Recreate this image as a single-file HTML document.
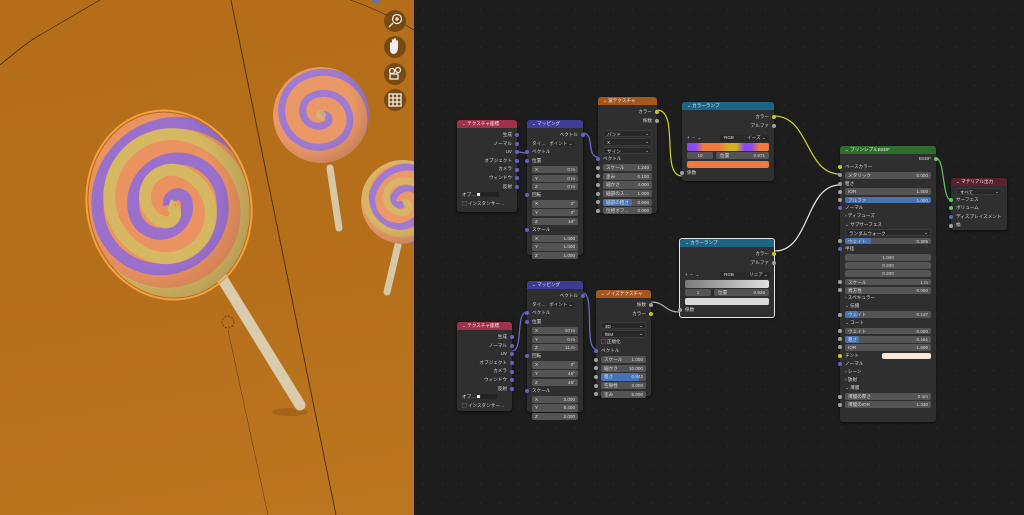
<!DOCTYPE html>
<html><head><meta charset="utf-8"><style>
*{margin:0;padding:0;box-sizing:border-box}
body{width:1024px;height:515px;overflow:hidden;background:#1d1d1d;position:relative;font-family:"Liberation Sans","Noto Sans CJK JP",sans-serif}
#vp{position:absolute;left:0;top:0;width:414px;height:515px;overflow:hidden;background:linear-gradient(170deg,#b56d19 0%,#b56e1a 50%,#bd7620 100%)}
#ne{position:absolute;left:414px;top:0;width:610px;height:515px;background-color:#1d1d1d;background-image:radial-gradient(#262626 0.8px,transparent 1px);background-size:19px 19px}
.n{position:absolute;background:#2f2f2f;border-radius:3px;box-shadow:0 1px 3px rgba(0,0,0,.6);font-size:4.6px;color:#dcdcdc}
.h{height:8px;line-height:8px;padding-left:5px;border-radius:3px 3px 0 0;color:#eee;font-size:4.6px}
.b{padding-top:3px}
.r{height:8.6px;line-height:8.6px;position:relative;padding:0 5px;white-space:nowrap}
.o{text-align:right}
.s{position:absolute;top:2.3px;width:4px;height:4px;border-radius:50%;background:#a1a1a1}
.o .s{right:-2px}.i .s,.f .s{left:-2px}
.p{background:#6363c7!important}.y{background:#c7c729!important}.g{background:#5fc75f!important}
.bx{position:absolute;left:5px;right:5px;top:0.7px;bottom:0.7px;background:#545454;border-radius:2px;padding:0 3px;line-height:7.2px}
.bx b{font-weight:normal;float:right}
.dd{background:#282828;border:0.5px solid #3a3a3a}
.dd:after{content:"⌄";position:absolute;right:2px;top:-1px}
.bl{position:absolute;left:0;top:0;bottom:0;background:#4772b3;border-radius:2px}
.bx span{position:relative}
.sw{position:absolute;border-radius:2px}
</style></head><body>
<div id="vp">
<svg width="414" height="515" style="position:absolute;left:0;top:0">
<defs>
<path id="sp" fill="none" stroke-width="14" d="M0,0 A10.5,10.5 0 0 1 21,0 A31.5,31.5 0 0 1 -42,0 A52.5,52.5 0 0 1 63,0 A73.5,73.5 0 0 1 -84,0 A94.5,94.5 0 0 1 105,0 A115.5,115.5 0 0 1 -126,0 A136.5,136.5 0 0 1 147,0"/>
<clipPath id="c1"><ellipse cx="0" cy="0" rx="80" ry="93"/></clipPath>
<clipPath id="c2"><circle cx="0" cy="0" r="48"/></clipPath>
<clipPath id="c3"><circle cx="0" cy="0" r="42"/></clipPath>
<radialGradient id="sh" cx="0.4" cy="0.4" r="0.7"><stop offset="0.6" stop-color="#000" stop-opacity="0"/><stop offset="1" stop-color="#000" stop-opacity="0.18"/></radialGradient>
</defs>
<path d="M0,65 Q30,40 40,35 L100,0" stroke="#3a2408" stroke-width="0.7" fill="none"/>
<path d="M231,0 L336,515" stroke="#3a2408" stroke-width="0.8" fill="none"/>
<path d="M228,330 L268,515" stroke="#5a3a10" stroke-width="0.5" fill="none"/>
<path d="M350,0 Q380,10 414,30" stroke="#3a2408" stroke-width="0.6" fill="none"/>
<ellipse cx="290" cy="412" rx="18" ry="4" fill="#8a5010" opacity="0.4"/>
<line x1="220" y1="275" x2="300" y2="405" stroke="#d9cbab" stroke-width="11" stroke-linecap="round"/>
<line x1="330" y1="168" x2="339" y2="228" stroke="#d6c8a6" stroke-width="7" stroke-linecap="round"/>
<line x1="398" y1="245" x2="387" y2="292" stroke="#d6c8a6" stroke-width="7" stroke-linecap="round"/>
<g transform="translate(169,205) rotate(-12)">
<ellipse cx="0" cy="0" rx="82" ry="95" fill="none" stroke="#f5a040" stroke-width="2"/>
<g clip-path="url(#c1)">
<ellipse cx="0" cy="0" rx="80" ry="93" fill="#ea9260"/>
<g transform="scale(0.85)">
<use href="#sp" stroke="#9a70cc"/>
<use href="#sp" stroke="#d6b862" transform="rotate(120)"/>
</g>
<ellipse cx="0" cy="0" rx="80" ry="93" fill="url(#sh)"/>
</g></g>
<circle cx="175" cy="205" r="1.5" fill="#f39040"/>
<circle cx="228" cy="322" r="6" fill="none" stroke="#4a2c08" stroke-width="0.7" stroke-dasharray="2 1.5"/>
<g transform="translate(321,115)">
<g clip-path="url(#c2)">
<circle r="48" fill="#eb9868"/>
<g transform="scale(0.5) rotate(60)">
<use href="#sp" stroke="#a07ad0"/>
</g>
<circle r="5" fill="#d6b86c" opacity="0.7"/>
<circle r="48" fill="url(#sh)"/>
</g></g>
<g transform="translate(403,202)">
<g clip-path="url(#c3)">
<circle r="42" fill="#eb9868"/>
<g transform="scale(0.5) rotate(200)">
<use href="#sp" stroke="#a07ad0"/>
<use href="#sp" stroke="#d8b466" transform="rotate(240)"/>
</g>
<circle r="42" fill="url(#sh)"/>
</g></g>
<g fill="#6e4410" opacity="0.85">
<circle cx="395" cy="21" r="11"/><circle cx="395" cy="47" r="11"/><circle cx="395" cy="74" r="11"/><circle cx="395" cy="100" r="11"/>
</g>
<circle cx="376" cy="0" r="4" fill="#6b6fa8"/>
<g stroke="#eee" fill="none" stroke-width="1.3">
<circle cx="397" cy="19" r="4.5"/><line x1="393" y1="23" x2="389" y2="27"/><line x1="397" y1="17" x2="397" y2="21"/><line x1="395" y1="19" x2="399" y2="19"/>
<rect x="389" y="94" width="12" height="12"/><line x1="393" y1="94" x2="393" y2="106"/><line x1="397" y1="94" x2="397" y2="106"/><line x1="389" y1="98" x2="401" y2="98"/><line x1="389" y1="102" x2="401" y2="102"/>
<circle cx="392" cy="71" r="2.5"/><circle cx="398" cy="70" r="2.5"/><rect x="390" y="74" width="8" height="5"/>
</g>
<path d="M390,50 L390,43 Q391,41 392,43 L392,47 L392,40 Q393,38 394,40 L394,46 L394,39 Q395,37 396,39 L396,46 L396,41 Q397,39 398,41 L398,49 Q397,54 393,54 Q390,53 390,50Z" fill="#eee"/>
</svg>
</div>
<div id="ne"></div>
<svg width="1024" height="515" style="position:absolute;left:0;top:0;z-index:1" fill="none" stroke-width="1.2">
<path d="M517,152 C522,152 522,153 527,153" stroke="#6b6bd0"/>
<path d="M583,133 C595,133 586,157 598,157" stroke="#6b6bd0"/>
<path d="M657,110 C680,110 660,176 682,176" stroke="#d0d030"/>
<path d="M774,116 C810,116 805,174 840,174" stroke="#d0d030"/>
<path d="M775,251 C810,251 805,185 840,185" stroke="#e0e0e0"/>
<path d="M651,302 C665,302 665,312 679,312" stroke="#b0b0b0"/>
<path d="M512,351 C524,351 515,312 527,312" stroke="#6b6bd0"/>
<path d="M583,293 C595,293 584,349 596,349" stroke="#6b6bd0"/>
<path d="M936,158 C945,158 942,200 951,200" stroke="#5fc75f"/>
</svg>
<div style="position:absolute;left:0;top:0;z-index:2">

<div class="n" style="left:457px;top:120px;width:60px;height:92px">
<div class="h" style="background:#a0304e">⌄ テクスチャ座標</div><div class="b">
<div class="r o">生成<i class="s p"></i></div><div class="r o">ノーマル<i class="s p"></i></div><div class="r o">UV<i class="s p"></i></div><div class="r o">オブジェクト<i class="s p"></i></div><div class="r o">カメラ<i class="s p"></i></div><div class="r o">ウィンドウ<i class="s p"></i></div><div class="r o">反射<i class="s p"></i></div>
<div class="r">オブ… <span style="background:#eee;display:inline-block;width:3px;height:3px"></span> <span style="background:#222;display:inline-block;width:18px;height:5px;vertical-align:middle"></span></div>
<div class="r">▢ インスタンサー…</div></div></div>

<div class="n" style="left:527px;top:120px;width:56px;height:135px">
<div class="h" style="background:#3f3c96">⌄ マッピング</div><div class="b">
<div class="r o">ベクトル<i class="s p"></i></div>
<div class="r">タイ… <span style="background:#282828;padding:0 2px">ポイント ⌄</span></div>
<div class="r i">ベクトル<i class="s p"></i></div><div class="r i">位置<i class="s p"></i></div>
<div class="r f"><div class="bx">X<b>0 m</b></div></div><div class="r f"><div class="bx">Y<b>0 m</b></div></div><div class="r f"><div class="bx">Z<b>0 m</b></div></div>
<div class="r i">回転<i class="s p"></i></div>
<div class="r f"><div class="bx">X<b>0°</b></div></div><div class="r f"><div class="bx">Y<b>0°</b></div></div><div class="r f"><div class="bx">Z<b>10°</b></div></div>
<div class="r i">スケール<i class="s p"></i></div>
<div class="r f"><div class="bx">X<b>1.000</b></div></div><div class="r f"><div class="bx">Y<b>1.000</b></div></div><div class="r f"><div class="bx">Z<b>1.000</b></div></div>
</div></div>

<div class="n" style="left:598px;top:97px;width:59px;height:116px">
<div class="h" style="background:#a8561c">⌄ 波テクスチャ</div><div class="b">
<div class="r o">カラー<i class="s y"></i></div><div class="r o">係数<i class="s"></i></div>
<div class="r" style="height:4px"></div>
<div class="r"><div class="bx dd">バンド</div></div><div class="r"><div class="bx dd">X</div></div><div class="r"><div class="bx dd">サイン</div></div>
<div class="r i">ベクトル<i class="s p"></i></div>
<div class="r f"><i class="s"></i><div class="bx">スケール<b>1.240</b></div></div>
<div class="r f"><i class="s"></i><div class="bx">歪み<b>0.100</b></div></div>
<div class="r f"><i class="s"></i><div class="bx">細かさ<b>4.000</b></div></div>
<div class="r f"><i class="s"></i><div class="bx">細部のス…<b>1.000</b></div></div>
<div class="r f"><i class="s"></i><div class="bx"><div class="bl" style="width:60%"></div><span>細部の粗さ</span><b style="position:relative">0.500</b></div></div>
<div class="r f"><i class="s"></i><div class="bx">位相オフ…<b>0.000</b></div></div>
</div></div>

<div class="n" style="left:682px;top:102px;width:92px;height:79px">
<div class="h" style="background:#1e6585">⌄ カラーランプ</div><div class="b">
<div class="r o">カラー<i class="s y"></i></div><div class="r o">アルファ<i class="s"></i></div>
<div class="r" style="height:4px"></div>
<div class="r">+ &nbsp;− &nbsp;⌄ <span style="position:absolute;left:38px;top:1px;width:24px;height:6.5px;background:#282828;padding-left:4px;line-height:6.5px">RGB</span><span style="position:absolute;left:63px;top:1px;width:24px;height:6.5px;background:#282828;padding-left:2px;line-height:6.5px">イーズ ⌄</span></div>
<div class="r"><div class="sw" style="left:5px;right:5px;top:0;height:8px;background:linear-gradient(90deg,#8a4af0 0%,#8a4af0 10%,#f07a40 20%,#f07a40 40%,#d4b020 50%,#d4b020 60%,#8a4af0 70%,#8a4af0 78%,#f07a40 88%,#f07a40 100%)"></div></div>
<div class="r"><div class="sw" style="left:5px;width:26px;top:1px;height:7px;background:#545454;text-align:center;line-height:7px">10</div><div class="sw" style="left:34px;right:5px;top:1px;height:7px;background:#545454;line-height:7px;padding:0 4px">位置<b style="float:right;font-weight:normal">0.971</b></div></div>
<div class="r"><div class="sw" style="left:5px;right:5px;top:1px;height:7px;background:#f07a40"></div></div>
<div class="r i">係数<i class="s"></i></div>
</div></div>

<div class="n" style="left:679px;top:238px;width:96px;height:80px;border:1px solid #e8e8e8">
<div class="h" style="background:#1e6585">⌄ カラーランプ</div><div class="b">
<div class="r o">カラー<i class="s y"></i></div><div class="r o">アルファ<i class="s"></i></div>
<div class="r" style="height:4px"></div>
<div class="r">+ &nbsp;− &nbsp;⌄ <span style="position:absolute;left:40px;top:1px;width:26px;height:6.5px;background:#282828;padding-left:4px;line-height:6.5px">RGB</span><span style="position:absolute;left:67px;top:1px;width:24px;height:6.5px;background:#282828;padding-left:2px;line-height:6.5px">リニア ⌄</span></div>
<div class="r"><div class="sw" style="left:5px;right:5px;top:0;height:8px;background:linear-gradient(90deg,#7a7a7a,#e0e0e0)"></div></div>
<div class="r"><div class="sw" style="left:5px;width:26px;top:1px;height:7px;background:#545454;text-align:center;line-height:7px">1</div><div class="sw" style="left:34px;right:5px;top:1px;height:7px;background:#545454;line-height:7px;padding:0 4px">位置<b style="float:right;font-weight:normal">0.926</b></div></div>
<div class="r"><div class="sw" style="left:5px;right:5px;top:1px;height:7px;background:#d8d8d8"></div></div>
<div class="r i">係数<i class="s"></i></div>
</div></div>

<div class="n" style="left:527px;top:281px;width:56px;height:131px">
<div class="h" style="background:#3f3c96">⌄ マッピング</div><div class="b">
<div class="r o">ベクトル<i class="s p"></i></div>
<div class="r">タイ… <span style="background:#282828;padding:0 2px">ポイント ⌄</span></div>
<div class="r i">ベクトル<i class="s p"></i></div><div class="r i">位置<i class="s p"></i></div>
<div class="r f"><div class="bx">X<b>10 m</b></div></div><div class="r f"><div class="bx">Y<b>0 m</b></div></div><div class="r f"><div class="bx">Z<b>11 m</b></div></div>
<div class="r i">回転<i class="s p"></i></div>
<div class="r f"><div class="bx">X<b>0°</b></div></div><div class="r f"><div class="bx">Y<b>45°</b></div></div><div class="r f"><div class="bx">Z<b>45°</b></div></div>
<div class="r i">スケール<i class="s p"></i></div>
<div class="r f"><div class="bx">X<b>3.000</b></div></div><div class="r f"><div class="bx">Y<b>9.400</b></div></div><div class="r f"><div class="bx">Z<b>2.000</b></div></div>
</div></div>

<div class="n" style="left:596px;top:290px;width:55px;height:106px">
<div class="h" style="background:#a8561c">⌄ ノイズテクスチャ</div><div class="b">
<div class="r o">係数<i class="s"></i></div><div class="r o">カラー<i class="s y"></i></div>
<div class="r" style="height:3px"></div>
<div class="r"><div class="bx dd">3D</div></div><div class="r"><div class="bx dd">fBM</div></div>
<div class="r">▢ 正規化</div>
<div class="r i">ベクトル<i class="s p"></i></div>
<div class="r f"><i class="s"></i><div class="bx">スケール<b>1.000</b></div></div>
<div class="r f"><i class="s"></i><div class="bx">細かさ<b>10.000</b></div></div>
<div class="r f"><i class="s"></i><div class="bx"><div class="bl" style="width:84%"></div><span>粗さ</span><b style="position:relative">0.842</b></div></div>
<div class="r f"><i class="s"></i><div class="bx">空隙性<b>2.000</b></div></div>
<div class="r f"><i class="s"></i><div class="bx">歪み<b>5.000</b></div></div>
</div></div>

<div class="n" style="left:457px;top:322px;width:55px;height:89px">
<div class="h" style="background:#a0304e">⌄ テクスチャ座標</div><div class="b">
<div class="r o">生成<i class="s p"></i></div><div class="r o">ノーマル<i class="s p"></i></div><div class="r o">UV<i class="s p"></i></div><div class="r o">オブジェクト<i class="s p"></i></div><div class="r o">カメラ<i class="s p"></i></div><div class="r o">ウィンドウ<i class="s p"></i></div><div class="r o">反射<i class="s p"></i></div>
<div class="r">オブ… <span style="background:#eee;display:inline-block;width:3px;height:3px"></span> <span style="background:#222;display:inline-block;width:16px;height:5px;vertical-align:middle"></span></div>
<div class="r">▢ インスタンサー…</div></div></div>

<div class="n" style="left:840px;top:146px;width:96px;height:276px">
<div class="h" style="background:#2d6e2d">⌄ プリンシプルBSDF</div><div class="b" style="padding-top:1px">
<style>.pr .r{height:8.2px;line-height:8.2px}.pr .s{top:2.1px}</style>
<div class="pr">
<div class="r o">BSDF<i class="s g"></i></div>
<div class="r i">ベースカラー<i class="s y"></i></div>
<div class="r f"><i class="s"></i><div class="bx">メタリック<b>0.000</b></div></div>
<div class="r i">粗さ<i class="s"></i></div>
<div class="r f"><i class="s"></i><div class="bx">IOR<b>1.500</b></div></div>
<div class="r f"><i class="s"></i><div class="bx" style="background:#4772b3">アルファ<b>1.000</b></div></div>
<div class="r i">ノーマル<i class="s p"></i></div>
<div class="r">› ディフューズ</div>
<div class="r">⌄ サブサーフェス</div>
<div class="r"><div class="bx dd">ランダムウォーク</div></div>
<div class="r f"><i class="s"></i><div class="bx"><div class="bl" style="width:30%"></div><span>ウェイト</span><b style="position:relative">0.305</b></div></div>
<div class="r i">半径<i class="s p"></i></div>
<div class="r f"><div class="bx" style="text-align:center">1.000</div></div>
<div class="r f"><div class="bx" style="text-align:center">0.200</div></div>
<div class="r f"><div class="bx" style="text-align:center">0.200</div></div>
<div class="r f"><i class="s"></i><div class="bx">スケール<b>1 m</b></div></div>
<div class="r f"><i class="s"></i><div class="bx">異方性<b>0.000</b></div></div>
<div class="r">› スペキュラー</div>
<div class="r">⌄ 伝播</div>
<div class="r f"><i class="s"></i><div class="bx"><div class="bl" style="width:15%"></div><span>ウェイト</span><b style="position:relative">0.147</b></div></div>
<div class="r">⌄ コート</div>
<div class="r f"><i class="s"></i><div class="bx">ウェイト<b>0.000</b></div></div>
<div class="r f"><i class="s"></i><div class="bx"><div class="bl" style="width:16%"></div><span>粗さ</span><b style="position:relative">0.161</b></div></div>
<div class="r f"><i class="s"></i><div class="bx">IOR<b>1.500</b></div></div>
<div class="r i">チント<i class="s y"></i><div class="sw" style="left:42px;right:5px;top:1px;height:6.5px;background:#fde8d8"></div></div>
<div class="r i">ノーマル<i class="s p"></i></div>
<div class="r">› シーン</div>
<div class="r">› 放射</div>
<div class="r">⌄ 薄膜</div>
<div class="r f"><i class="s"></i><div class="bx">薄膜の厚さ<b>0 nm</b></div></div>
<div class="r f"><i class="s"></i><div class="bx">薄膜のIOR<b>1.330</b></div></div>
</div></div></div>

<div class="n" style="left:951px;top:178px;width:56px;height:52px">
<div class="h" style="background:#5c1f2e">⌄ マテリアル出力</div><div class="b" style="padding-top:1px">
<div class="r"><div class="bx dd">すべて</div></div>
<div class="r i">サーフェス<i class="s g"></i></div>
<div class="r i">ボリューム<i class="s g"></i></div>
<div class="r i">ディスプレイスメント<i class="s p"></i></div>
<div class="r i">幅<i class="s"></i></div>
</div></div>
</div>
</body></html>
